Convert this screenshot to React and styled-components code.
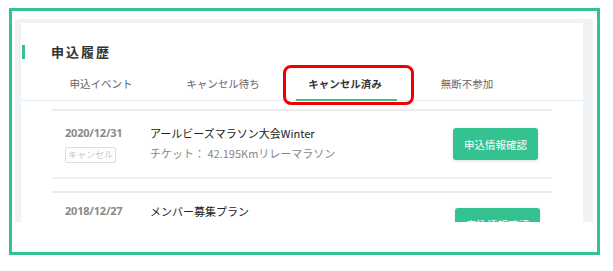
import React from "react";
import styled, { createGlobalStyle } from "styled-components";

const GlobalStyle = createGlobalStyle`
  html, body {
    margin: 0;
    padding: 0;
    background: #ffffff;
  }
  body {
    font-family: "Noto Sans CJK JP", "Noto Sans", sans-serif;
  }
`;

const GREEN = "#33c290";

export default function App() {
  const tabs = ["申込イベント", "キャンセル待ち", "キャンセル済み", "無断不参加"];
  const activeTab = 2;

  const entries = [
    {
      date: "2020/12/31",
      badge: "キャンセル",
      title: "アールビーズマラソン大会Winter",
      ticket: "チケット： 42.195Kmリレーマラソン",
    },
    {
      date: "2018/12/27",
      title: "メンバー募集プラン",
    },
  ];

  return (
    <>
      <GlobalStyle />
      <Frame>
        <Screen>
          <Card>
            <HeadingRow>
              <HeadingBar />
              <Heading>申込履歴</Heading>
            </HeadingRow>

            <TabBar>
              {tabs.map((label, i) => (
                <Tab key={label} $active={i === activeTab}>
                  {label}
                  {i === activeTab && <TabUnderline />}
                  {i === activeTab && <Highlight />}
                </Tab>
              ))}
            </TabBar>

            <List>
              {entries.map((item) => (
                <Row key={item.date} $compact={!item.ticket}>
                  <DateCol>
                    <DateText>{item.date}</DateText>
                    {item.badge && <Badge>{item.badge}</Badge>}
                  </DateCol>
                  <Info>
                    <Title>{item.title}</Title>
                    {item.ticket && <Ticket>{item.ticket}</Ticket>}
                  </Info>
                  <ConfirmButton>申込情報確認</ConfirmButton>
                </Row>
              ))}
            </List>
          </Card>
        </Screen>
      </Frame>
    </>
  );
}

// green frame around the whole capture
const Frame = styled.div`
  box-sizing: border-box;
  margin: 8px 0 0 9px;
  width: 591px;
  height: 247px;
  border: 3px solid ${GREEN};
  padding: 8px 4px 0 3px;
  background: #fff;
`;

const Screen = styled.div`
  height: 203px;
  overflow: hidden;
  background: #eff3f6;
  padding: 4px 10px 0 6px;
  box-sizing: border-box;
`;

const Card = styled.div`
  background: #fff;
  height: 100%;
  padding-top: 22px;
  box-sizing: border-box;
`;

const HeadingRow = styled.div`
  display: flex;
  align-items: center;
  height: 14px;
`;

const HeadingBar = styled.div`
  width: 3px;
  height: 14px;
  margin-left: 1px;
  background: ${GREEN};
`;

const Heading = styled.h2`
  margin: 0 0 0 26px;
  font-size: 13px;
  line-height: 14px;
  font-weight: 700;
  letter-spacing: 2px;
  color: #333;
`;

const TabBar = styled.div`
  display: flex;
  margin-top: 7px;
  padding-left: 19px;
  border-bottom: 1px solid #e4ebf1;
`;

const Tab = styled.div`
  position: relative;
  width: 122px;
  height: 34px;
  display: flex;
  align-items: center;
  justify-content: center;
  font-size: 10.5px;
  color: ${(p) => (p.$active ? "#333" : "#666")};
  font-weight: ${(p) => (p.$active ? 700 : 400)};
`;

const TabUnderline = styled.span`
  position: absolute;
  left: 12px;
  bottom: -1px;
  width: 101px;
  height: 2px;
  background: ${GREEN};
`;

// red annotation box drawn over the active tab
const Highlight = styled.span`
  position: absolute;
  left: -1px;
  top: -1px;
  width: 131px;
  height: 40px;
  box-sizing: border-box;
  border: 3px solid #f20000;
  border-radius: 8px;
  pointer-events: none;
`;

const List = styled.div`
  padding: 8px 31px 0;
`;

const Row = styled.div`
  display: flex;
  align-items: flex-start;
  height: 70px;
  box-sizing: border-box;
  padding: ${(p) => (p.$compact ? "10px 12px 0 13px" : "14px 14px 0 13px")};
  border-top: 2px solid #ececec;
  border-bottom: 2px solid #f0f0f0;
  margin-bottom: 12px;
`;

const DateCol = styled.div`
  width: 85px;
  display: flex;
  flex-direction: column;
  align-items: flex-start;
`;

const DateText = styled.div`
  font-family: "Noto Sans", sans-serif;
  font-size: 11px;
  line-height: 16px;
  font-weight: 700;
  color: #8a8a8a;
  letter-spacing: -0.2px;
`;

const Badge = styled.span`
  margin-top: 6px;
  height: 16px;
  box-sizing: border-box;
  padding: 0 2px;
  border: 1px solid #dddddd;
  border-radius: 2px;
  font-size: 9px;
  line-height: 14px;
  color: #c8c8c8;
`;

const Info = styled.div`
  flex: 1;
`;

const Title = styled.div`
  font-size: 11px;
  line-height: 16px;
  color: #222;
`;

const Ticket = styled.div`
  margin-top: 4px;
  font-size: 11px;
  line-height: 16px;
  color: #888;
`;

const ConfirmButton = styled.button`
  align-self: center;
  margin-top: -14px;
  width: 85px;
  height: 32px;
  border: none;
  border-radius: 3px;
  background: ${GREEN};
  color: #fff;
  font-family: "Noto Sans CJK JP", sans-serif;
  font-size: 10.5px;
  box-shadow: 0 1px 3px rgba(0, 0, 0, 0.12);
  cursor: pointer;
`;
